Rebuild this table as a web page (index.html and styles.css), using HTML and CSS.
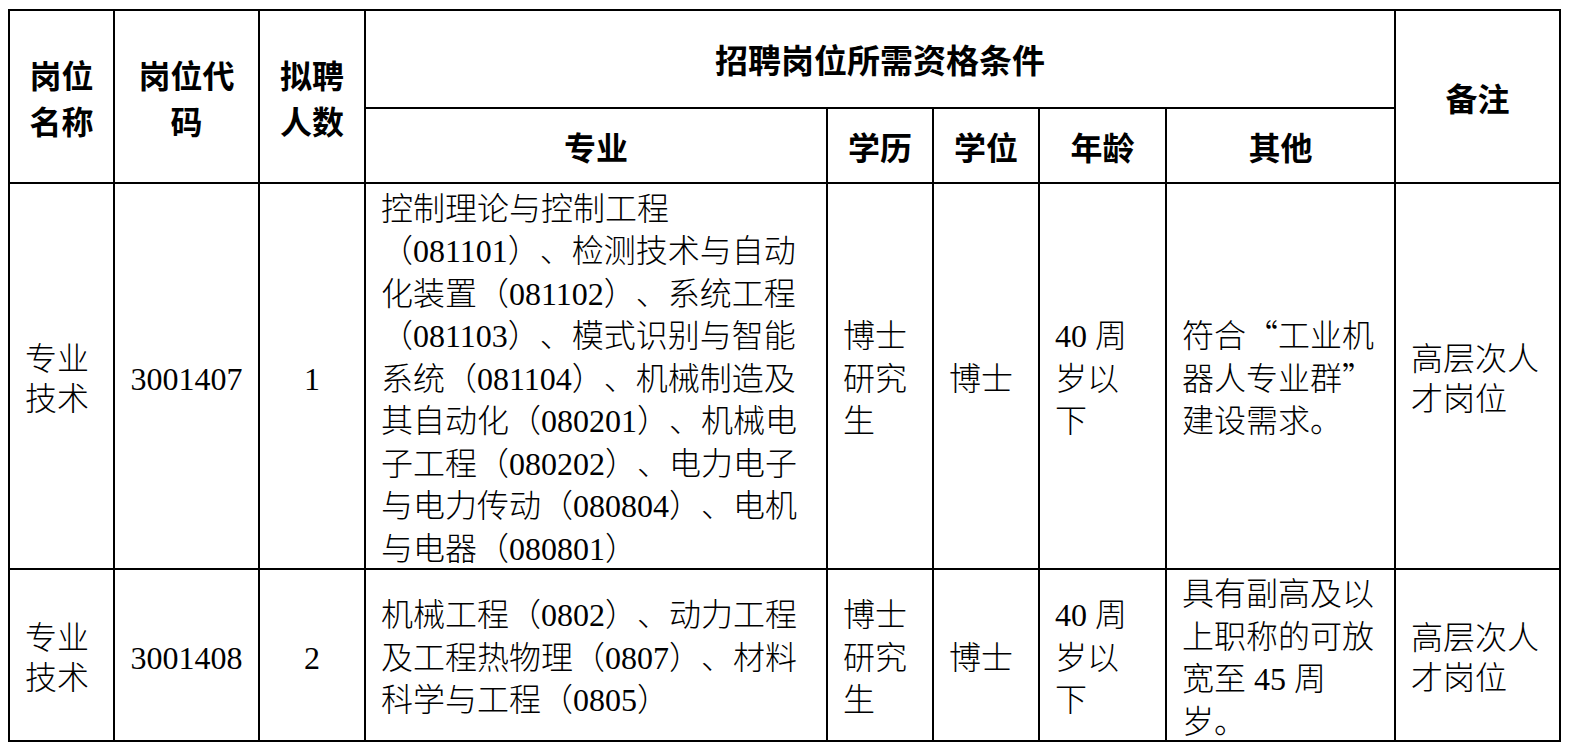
FILE: index.html
```html
<!DOCTYPE html>
<html lang="zh-CN">
<head>
<meta charset="utf-8">
<title>招聘岗位</title>
<link rel="stylesheet" href="styles.css">
</head>
<body>
<table class="jobs">
  <colgroup>
    <col class="c-name"><col class="c-code"><col class="c-num"><col class="c-major"><col class="c-edu"><col class="c-deg"><col class="c-age"><col class="c-other"><col class="c-note">
  </colgroup>
  <thead>
    <tr class="h1">
      <th rowspan="2">岗位<br>名称</th>
      <th rowspan="2">岗位代<br>码</th>
      <th rowspan="2">拟聘<br>人数</th>
      <th colspan="5" class="wide">招聘岗位所需资格条件</th>
      <th rowspan="2">备注</th>
    </tr>
    <tr class="h2">
      <th>专业</th><th>学历</th><th>学位</th><th>年龄</th><th>其他</th>
    </tr>
  </thead>
  <tbody>
    <tr class="r1">
      <td class="tight">专业<br>技术</td>
      <td class="center"><span class="n">3001407</span></td>
      <td class="center"><span class="n">1</span></td>
      <td class="major">控制理论与控制工程<br>（<span class="n">081101</span>）、检测技术与自动<br>化装置（<span class="n">081102</span>）、系统工程<br>（<span class="n">081103</span>）、模式识别与智能<br>系统（<span class="n">081104</span>）、机械制造及<br>其自动化（<span class="n">080201</span>）、机械电<br>子工程（<span class="n">080202</span>）、电力电子<br>与电力传动（<span class="n">080804</span>）、电机<br>与电器（<span class="n">080801</span>）</td>
      <td>博士<br>研究<br>生</td>
      <td>博士</td>
      <td><span class="n">40 </span>周<br>岁以<br>下</td>
      <td>符合<span class="lq">“</span>工业机<br>器人专业群<span class="rq">”</span><br>建设需求。</td>
      <td class="tight">高层次人<br>才岗位</td>
    </tr>
    <tr class="r2">
      <td class="tight">专业<br>技术</td>
      <td class="center"><span class="n">3001408</span></td>
      <td class="center"><span class="n">2</span></td>
      <td class="major">机械工程（<span class="n">0802</span>）、动力工程<br>及工程热物理（<span class="n">0807</span>）、材料<br>科学与工程（<span class="n">0805</span>）</td>
      <td>博士<br>研究<br>生</td>
      <td>博士</td>
      <td><span class="n">40 </span>周<br>岁以<br>下</td>
      <td>具有副高及以<br>上职称的可放<br>宽至<span class="n"> 45 </span>周<br>岁。</td>
      <td class="tight">高层次人<br>才岗位</td>
    </tr>
  </tbody>
</table>
</body>
</html>
```
FILE: styles.css
```css
html, body {
  margin: 0;
  background: #ffffff;
}

body {
  padding: 9px 0 0 8px;
}

.jobs {
  border-collapse: collapse;
  table-layout: fixed;
  width: 1553px;
  font-family: "Noto Sans CJK SC", sans-serif;
  font-size: 32px;
  color: #000000;
  text-spacing-trim: space-all;
}

.c-name { width: 105px; }
.c-code { width: 145px; }
.c-num { width: 106px; }
.c-major { width: 462px; }
.c-edu { width: 106px; }
.c-deg { width: 106px; }
.c-age { width: 127px; }
.c-other { width: 229px; }
.c-note { width: 165px; }

.jobs th,
.jobs td {
  border: 2px solid #000000;
  padding: 0 0 0 15px;
  vertical-align: middle;
  white-space: nowrap;
}

.jobs th {
  font-weight: 700;
  text-align: center;
  padding: 0;
  line-height: 46px;
}

.jobs th.wide {
  font-size: 33px;
}

.jobs td {
  text-align: left;
  line-height: 42.5px;
  font-weight: 300;
}

.jobs td.center {
  text-align: center;
  padding: 0;
}

.jobs td.tight {
  line-height: 40px;
}

.n {
  font-family: "Liberation Serif", serif;
  font-weight: 400;
  line-height: 0;
}

.h1 { height: 98px; }
.h2 { height: 75px; }
.r1 { height: 386px; }
.r2 { height: 172px; }

.lq,
.rq {
  display: inline-block;
  width: 1em;
  line-height: 0;
}

.lq { text-align: right; }
.rq { text-align: left; }
```
